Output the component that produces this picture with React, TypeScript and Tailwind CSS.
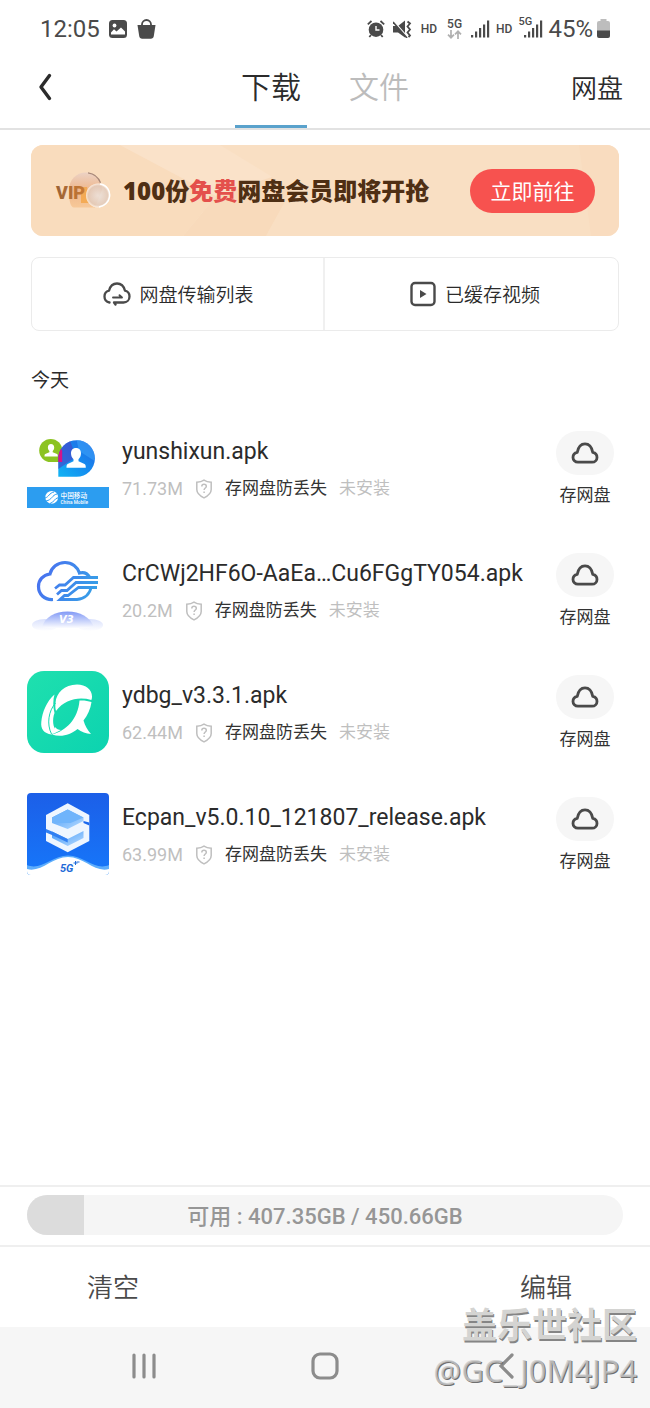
import React from 'react';

interface ApkFile {
  name: string;
  size: string;
  logo: React.ReactNode;
}

const YunshixunLogo: React.FC = () => (
  <svg viewBox="0 0 82 82" className="w-full h-full" aria-hidden="true">
    <defs>
      <linearGradient id="ysx" x1="0" y1="1" x2="1" y2="0">
        <stop offset="0" stopColor="#12b4f4" />
        <stop offset="0.55" stopColor="#1587ee" />
        <stop offset="1" stopColor="#2a5fe0" />
      </linearGradient>
    </defs>
    <path d="M23.7 12a11.5 11.5 0 0 1 11.5 11.5V35H23.7a11.5 11.5 0 0 1 0-23z" fill="#8cc322" />
    <path d="M31.3 49.8V31.4A18.3 18.3 0 1 1 49.6 49.8z" fill="url(#ysx)" />
    <path d="M31.3 31.4a18.3 18.3 0 0 1 12-17.2L49 30 31.3 42z" fill="#4a3fc4" opacity="0.6" />
    <path d="M49.6 13a18.3 18.3 0 0 1 18 21L52 24z" fill="#3aa4f8" opacity="0.6" />
    <path d="M31.3 35v-3.600c0-3.500 1-6.500 2.600-9.300.8.600 1.300 1.500 1.300 2.500V35z" fill="#d6148a" />
    <g fill="#fff">
      <path d="M24 17c2 0 3.200 1.400 3.200 3.400 0 1.500-.6 2.800-1.500 3.500v1.300l4.300 1.800c.6.300.8 1 .8 2.500H17.500c0-1.500.2-2.200.8-2.500l4.100-1.800v-1.300c-.9-.7-1.500-2-1.500-3.500 0-2 1.100-3.400 3.100-3.400z" />
      <path d="M49 21c3.300 0 5 2.200 5 5.300 0 2.600-1 4.700-2.500 5.900v2l6 2.700c1 .5 1.300 1.500 1.300 3.800H39.500c0-2.300.2-3.300 1.200-3.800l5.800-2.700v-2c-1.500-1.200-2.500-3.300-2.500-5.900 0-3.100 1.700-5.300 5-5.300z" />
    </g>
    <path d="M0 60h82v21H0z" fill="#2c9df0" />
    <circle cx="24.700" cy="70.300" r="6.400" fill="#fff" />
    <g stroke="#2c9df0" strokeWidth="1" fill="none">
      <path d="M18 71c4-1 4-5 9-6M19 74c6-1 6-6 11-7M23 76.500c4-1 4-5 8.500-6" />
    </g>
    <text x="33.500" y="71" fontSize="6.700" fill="#fff" fontWeight="500" fontFamily="Noto Sans CJK SC, sans-serif">中国移动</text>
    <text x="33.500" y="76.500" fontSize="4.700" fill="#fff" fontWeight="500" fontFamily="Roboto, sans-serif">China Mobile</text>
  </svg>
);

const CloudV3Logo: React.FC = () => (
  <svg viewBox="0 0 82 82" className="w-full h-full" aria-hidden="true">
    <defs>
      <linearGradient id="v3line" gradientUnits="userSpaceOnUse" x1="10" y1="20" x2="72" y2="50">
        <stop offset="0" stopColor="#4a6ef0" />
        <stop offset="1" stopColor="#35a4e6" />
      </linearGradient>
      <linearGradient id="v3base" x1="0" y1="0" x2="0" y2="1">
        <stop offset="0" stopColor="#8199f6" />
        <stop offset="1" stopColor="#fff" />
      </linearGradient>
    </defs>
    <g fill="none" stroke="url(#v3line)" strokeWidth="3.200">
      <path d="M26 50.500C17 51 11.500 45 11.500 37.500c0-6.500 4.500-11.500 11.500-12.500 1.500-6.500 7.500-11.500 15-11.500 7 0 12.500 4.500 14.500 10.500 4-1 8 .5 10 4" />
      <path d="M71 28.500H46.500l-8.500 7.500h-5.500l-4.500 3.500" strokeWidth="2.800" />
      <path d="M71 33.500H49L40 41.500h-5.500L30 45.500" strokeWidth="2.800" />
      <path d="M70 38.500H51.500L41 46.500h-3.500L33 50.500h17c8-1 13-6 14-12" strokeWidth="2.800" />
    </g>
    <ellipse cx="18" cy="76" rx="13" ry="6" fill="url(#v3base)" opacity="0.3" />
    <ellipse cx="63" cy="76" rx="13" ry="6" fill="url(#v3base)" opacity="0.3" />
    <path d="M15 78c3-10 13-15.500 25.500-15.500S63 68 67 78c-10 2-42 2-52 0z" fill="url(#v3base)" />
    <text x="32" y="74" fontSize="10" fontWeight="700" fontStyle="italic" fill="#fff" fontFamily="DejaVu Sans, sans-serif">V3</text>
  </svg>
);

const YdbgLogo: React.FC = () => (
  <svg viewBox="0 0 82 82" className="w-full h-full" aria-hidden="true">
    <defs>
      <linearGradient id="ydbg" x1="0" y1="0" x2="1" y2="1">
        <stop offset="0" stopColor="#1fe0ae" />
        <stop offset="1" stopColor="#0cd3b0" />
      </linearGradient>
    </defs>
    <rect width="82" height="82" rx="17" fill="url(#ydbg)" />
    <g fill="#fff">
      <path d="M28.500 32C29 22 37.500 13.500 50 13.500c9 0 15 5 15 12 0 1.500-.2 2.500-.7 3.500C52 25.500 38 28 29 40c-.7-2.500-.8-5-.5-8z" />
      <path d="M27.500 23.500c-1.500 5-1.700 12 0 18.500-2.500 7-1.500 14 2 18l-5 3.500C17 62.500 13.500 58 14.300 51 15.300 41 19.500 30.500 27.500 23.500z" />
      <path d="M25 63.500C39 60 51 48 52.500 29.500c4-.3 8.500.2 12 1.500C63.500 38 60.500 44.500 56.500 49.500c1.500 5 4 9.500 7.500 13.500-5-.5-9.500-2-13.500-5-7 6-16.500 8.500-25.500 5.500z" />
      <path d="M28 56c1.500 2 3.500 3 6 3l-8 4z" />
    </g>
    <path d="M24.500 63c-5-10-3-23 4-31" fill="none" stroke="#14d9af" strokeWidth="1" />
  </svg>
);

const EcpanLogo: React.FC = () => (
  <svg viewBox="0 0 82 82" className="w-full h-full" aria-hidden="true">
    <defs>
      <linearGradient id="ecbg" x1="0" y1="0" x2="0" y2="1">
        <stop offset="0" stopColor="#1c5fe8" />
        <stop offset="1" stopColor="#1677fa" />
      </linearGradient>
      <linearGradient id="ecface" x1="0" y1="0" x2="1" y2="1">
        <stop offset="0" stopColor="#3f97f8" />
        <stop offset="1" stopColor="#b9dcff" />
      </linearGradient>
    </defs>
    <rect width="82" height="82" rx="4" fill="url(#ecbg)" />
    <path d="M40.700 10.300L62.300 22v26L40.700 59.300 19 48V22z" fill="#eef6ff" />
    <path d="M25 24.500l15.700-8 15.800 8V28l-15.800 8L25 30z" fill="url(#ecface)" />
    <path d="M25 24.500l15.700-8 15.800 8-13 5.500H25z" fill="#6fb4fb" />
    <path d="M56.500 28l5.800 1.500v3L56.500 30z" fill="#1a68ee" />
    <path d="M25 38.500l15.700 7.500 15.800-8v7l-15.800 8L25 45z" fill="url(#ecface)" />
    <path d="M25 38.500l15.700 7.500v3.500L25 42l-6-2.500V36z" fill="#2f7ff2" />
    <path d="M0 72c14 6 25-9.500 41-9.500S68 78 82 72v6a4 4 0 0 1-4 4H4a4 4 0 0 1-4-4z" fill="#5eaefc" />
    <path d="M0 76c14 4 25-12 41-12s27 16 41 12v2a4 4 0 0 1-4 4H4a4 4 0 0 1-4-4z" fill="#fff" />
    <text x="33" y="79" fontSize="11" fontWeight="700" fontStyle="italic" fill="#1f6bd8" fontFamily="Roboto, sans-serif">5G</text>
    <path d="M46.500 70h4M48.500 68v4M49.500 69h3" stroke="#1f6bd8" strokeWidth="1" />
  </svg>
);

const files: ApkFile[] = [
  { name: 'yunshixun.apk', size: '71.73M', logo: <YunshixunLogo /> },
  { name: 'CrCWj2HF6O-AaEa…Cu6FGgTY054.apk', size: '20.2M', logo: <CloudV3Logo /> },
  { name: 'ydbg_v3.3.1.apk', size: '62.44M', logo: <YdbgLogo /> },
  { name: 'Ecpan_v5.0.10_121807_release.apk', size: '63.99M', logo: <EcpanLogo /> },
];

const SignalBars: React.FC = () => (
  <svg width="19" height="18" viewBox="0 0 19 18" fill="#4a4a4a" aria-hidden="true">
    <path d="M0 15h2.200v2.500H0zM4 11.500h2.200v6H4zM8 8h2.200v9.500H8zM12 4.500h2.200v13H12zM16 .5h2.200v17H16z" />
  </svg>
);

const StatusBar: React.FC = () => (
  <div className="flex items-center justify-between h-[57px] px-10 text-[#4a4a4a]">
    <div className="flex items-center">
      <span className="text-2xl">12:05</span>
      <svg width="18" height="18" viewBox="0 0 18 18" className="ml-[9px]" aria-hidden="true">
        <rect width="18" height="18" rx="3.500" fill="#4a4a4a" />
        <circle cx="5.500" cy="5.500" r="1.900" fill="#fff" />
        <path d="M2 14.500v-2l3-3.200 2.500 2.200L12 7.500l4 4v3z" fill="#fff" />
      </svg>
      <svg width="19" height="20" viewBox="0 0 19 20" className="ml-2.5" aria-hidden="true">
        <path d="M5 8V5.500a4.500 4.500 0 0 1 9 0V8" fill="none" stroke="#4a4a4a" strokeWidth="1.800" />
        <path d="M.5 6h18l-1.700 11c-.3 1.800-1.300 2.800-3 2.800H5.200c-1.700 0-2.700-1-3-2.800z" fill="#4a4a4a" />
      </svg>
    </div>
    <div className="flex items-center">
      <svg width="18" height="18" viewBox="0 0 18 18" aria-hidden="true">
        <circle cx="9" cy="9.700" r="7.300" fill="#4a4a4a" />
        <path d="M.8 4.300L4.500 1M17.200 4.300L13.500 1M4 15l-1.700 2M14 15l1.700 2" stroke="#4a4a4a" strokeWidth="1.800" fill="none" />
        <path d="M9 6v4h3.500" stroke="#fff" strokeWidth="1.400" fill="none" />
      </svg>
      <svg width="19" height="18" viewBox="0 0 19 18" className="ml-2" aria-hidden="true">
        <path d="M0 6h5l7-5.500v17L5 12.500H0z" fill="#4a4a4a" />
        <path d="M0 .5l14 16" stroke="#fff" strokeWidth="1.600" />
        <path d="M0 2l14 16" stroke="#4a4a4a" strokeWidth="1.600" />
        <path d="M14.500 1.500l2.500 2-2.500 3 2.500 3-2.500 3 2.500 3-1.500 1.500" stroke="#4a4a4a" strokeWidth="1.800" fill="none" />
      </svg>
      <span className="ml-[9px] text-xs font-medium">HD</span>
      <span className="ml-2.5 flex flex-col items-center">
        <span className="text-xs leading-3 font-medium">5G</span>
        <svg width="15" height="9" viewBox="0 0 15 9" fill="none" stroke="#b0b0b0" strokeWidth="1.700" aria-hidden="true">
          <path d="M4 0v7.500M1 4.700l3 3 3-3M11 9V1.500M8 4.300l3-3 3 3" />
        </svg>
      </span>
      <span className="ml-[9px]"><SignalBars /></span>
      <span className="ml-1.5 text-xs font-medium">HD</span>
      <span className="relative ml-3">
        <SignalBars />
        <span className="absolute -left-1.5 -top-1 bg-white pr-px text-[11px] leading-3 font-medium">5G</span>
      </span>
      <span className="ml-[5px] text-2xl">45%</span>
      <svg width="13" height="19" viewBox="0 0 13 19" className="ml-1" aria-hidden="true">
        <path d="M3.500 0h6v2H11a2 2 0 0 1 2 2v8H0V4a2 2 0 0 1 2-2h1.500z" fill="#bdbdbd" />
        <path d="M0 11.500h13V17a2 2 0 0 1-2 2H2a2 2 0 0 1-2-2z" fill="#4a4a4a" />
      </svg>
    </div>
  </div>
);

const Header: React.FC = () => (
  <header className="flex items-stretch h-[73px] border-b-2 border-[#e2e2e2] px-[27px] text-[#2b2b2b] font-['Noto_Sans_CJK_SC',sans-serif]">
    <div className="flex flex-1 items-center pb-3">
      <button type="button" aria-label="返回" className="px-2.5">
        <svg width="16" height="28" viewBox="0 0 16 28" fill="none" stroke="#2b2b2b" strokeWidth="3.400" strokeLinecap="round" strokeLinejoin="round">
          <path d="M12.500 2.500L4 14l8.500 11.500" />
        </svg>
      </button>
    </div>
    <nav className="flex gap-9">
      <button type="button" className="border-b-3 border-[#5aa2cc] px-1.5 pb-3 text-3xl font-[350]">下载</button>
      <button type="button" className="border-b-3 border-transparent px-1.5 pb-3 text-3xl font-[350] text-[#bcbcbc]">文件</button>
    </nav>
    <div className="flex flex-1 items-center justify-end pb-3">
      <a href="#pan" className="text-[26px] font-[350]">网盘</a>
    </div>
  </header>
);

const Banner: React.FC = () => (
  <section className="relative flex items-center h-[91px] mt-[15px] mx-[31px] overflow-hidden rounded-xl bg-[#f9dfc3] px-6">
    <svg viewBox="0 0 588 91" preserveAspectRatio="none" className="absolute inset-0 w-full h-full" aria-hidden="true">
      <path d="M0 0h89l96 51-33 40H0z" fill="#f9dcbd" />
      <path d="M89 0h100l72 44-26 47h-83l33-40z" fill="#fae2c9" />
      <path d="M185 51l-33 40h83l26-47-20-12z" fill="#f8dabb" />
      <path d="M548 0h40v91h-28z" fill="#f9dcbf" />
    </svg>
    <svg width="56" height="40" viewBox="0 0 56 40" className="relative shrink-0" aria-hidden="true">
      <defs>
        <linearGradient id="vipDisc" x1="0" y1="0" x2="0" y2="1">
          <stop offset="0" stopColor="#ecd2c4" />
          <stop offset="0.5" stopColor="#efb78c" />
          <stop offset="1" stopColor="#f7c898" />
        </linearGradient>
        <linearGradient id="vipText" x1="0" y1="0" x2="1" y2="0">
          <stop offset="0" stopColor="#9a6236" />
          <stop offset="1" stopColor="#c97a34" />
        </linearGradient>
        <radialGradient id="vipGlass">
          <stop offset="0" stopColor="#ece4e0" />
          <stop offset="0.8" stopColor="#e2cbbc" />
          <stop offset="1" stopColor="#fdf4ec" />
        </radialGradient>
      </defs>
      <path d="M14 19C14 9 21 1.500 31 1.500S47 9 47 19l-7 17.500H19c-4 0-5-8-5-17.500z" fill="url(#vipDisc)" />
      <path d="M33 1.800c6 .8 10.500 4.700 12.500 10" stroke="#a88878" strokeWidth="1.200" fill="none" />
      <path d="M26 16h6l2 16h-8z" fill="#f4a546" opacity="0.8" />
      <circle cx="43" cy="24.500" r="12" fill="url(#vipGlass)" opacity="0.85" />
      <path d="M45 13c7 1 10.500 7 9.500 13S48 35 44 36" stroke="#fff" strokeWidth="1.500" fill="none" />
      <text x="1" y="28" fontSize="18" fontWeight="900" fill="url(#vipText)" fontFamily="Roboto, sans-serif">VIP</text>
    </svg>
    <p className="relative ml-3 text-2xl font-black whitespace-nowrap text-[#4f2f14] font-['Noto_Sans','Noto_Sans_CJK_SC',sans-serif]">
      100份<span className="text-[#e4504c]">免费</span>网盘会员即将开抢
    </p>
    <button type="button" className="relative ml-auto w-[125px] h-11 shrink-0 rounded-full bg-[#f7524f] text-[21px] text-white font-['Noto_Sans_CJK_SC',sans-serif]">
      立即前往
    </button>
  </section>
);

const QuickLinks: React.FC = () => (
  <section className="grid grid-cols-2 h-[74px] mt-[21px] mx-[31px] rounded-lg border border-[#ebebeb] divide-x-2 divide-[#f0f0f0] text-[19px] font-[350] text-[#2b2b2b] font-['Noto_Sans_CJK_SC',sans-serif]">
    <button type="button" className="flex items-center justify-center gap-2 pl-0.5">
      <svg width="28" height="24" viewBox="0 0 28 24" fill="none" stroke="#4a4a4a" strokeWidth="2.300" strokeLinecap="round" strokeLinejoin="round" aria-hidden="true">
        <path d="M6.500 20.500C3.500 20 1.500 17.500 1.500 14.500c0-3 2-5.200 4.500-5.800C7.200 4 10.200 1.500 14 1.500S20.800 4 22 8.700c2.500.6 4.500 2.800 4.500 5.800 0 3.400-2.600 6-6 6H11l1.500 2" />
        <path d="M10 15.500h9l-2.500-2.300" strokeWidth="1.900" />
      </svg>
      网盘传输列表
    </button>
    <button type="button" className="flex items-center justify-center gap-2 pl-1.5">
      <svg width="28" height="26" viewBox="0 0 28 26" fill="none" stroke="#4a4a4a" strokeWidth="2.400" aria-hidden="true">
        <rect x="2.500" y="2" width="23" height="22" rx="3.500" />
        <path d="M11 9l6.500 4-6.500 4z" fill="#4a4a4a" stroke="none" />
      </svg>
      已缓存视频
    </button>
  </section>
);

const FileRow: React.FC<{ file: ApkFile }> = ({ file }) => (
  <li className="flex items-start h-[82px]">
    <div className="w-[82px] h-[82px] shrink-0">{file.logo}</div>
    <div className="flex-1 min-w-0 pt-2 ml-[13px]">
      <h3 className="text-[23px] leading-[34px] whitespace-nowrap text-[#2b2b2b]">{file.name}</h3>
      <div className="flex items-center mt-2 h-6 text-[17px] text-[#bfbfbf]">
        <span className="text-lg">{file.size}</span>
        <svg width="18" height="20" viewBox="0 0 18 20" fill="none" stroke="#bfbfbf" strokeWidth="1.500" className="ml-3" aria-hidden="true">
          <path d="M9 1.200c2.200 1.500 4.500 2 7.200 2.100v7.200c0 4-3.500 6.500-7.200 8.300-3.700-1.800-7.200-4.300-7.200-8.300V3.300C4.500 3.200 6.800 2.700 9 1.200z" />
          <path d="M6.800 7.500c0-1.400 1-2.200 2.200-2.200s2.300.8 2.300 2.100c0 1.600-2.200 1.700-2.200 3.600M9.100 12.500v1.600" />
        </svg>
        <a href="#protect" className="ml-3 text-[#333]">存网盘防丢失</a>
        <span className="ml-3">未安装</span>
      </div>
    </div>
    <button type="button" className="flex flex-col items-center pt-1 shrink-0 text-[17px] text-[#333]">
      <span className="flex items-center justify-center w-[58px] h-11 rounded-full bg-[#f6f6f6]">
        <svg width="28" height="22" viewBox="0 0 28 22" fill="none" stroke="#4a4a4a" strokeWidth="2.800" strokeLinejoin="round" aria-hidden="true">
          <path d="M7 20.200c-3 0-5-2.200-5-4.800 0-2.500 1.700-4.500 4.200-5C7.200 5.200 10 1.800 14 1.800s6.800 3.400 7.800 8.600c2.500.5 4.200 2.500 4.200 5 0 2.600-2 4.800-5 4.800z" />
        </svg>
      </span>
      <span className="mt-2 leading-6">存网盘</span>
    </button>
  </li>
);

const StorageBar: React.FC = () => {
  const usedPercent = ((450.66 - 407.35) / 450.66) * 100;
  return (
    <div className="h-[62px] border-y-2 border-[#efefef] px-[27px] pt-2">
      <div className="relative flex items-center justify-center h-10 pt-0.5 overflow-hidden rounded-full bg-[#f5f5f5]">
        <div className="absolute left-0 inset-y-0 bg-[#dcdcdc]" style={{ width: `${usedPercent}%` }} />
        <span className="relative text-[22px] font-medium text-[#969696]">可用 : 407.35GB / 450.66GB</span>
      </div>
    </div>
  );
};

const BottomNav: React.FC = () => (
  <nav className="grid grid-cols-3 place-items-center h-[81px] px-[54px] pb-[3px] bg-[#f6f6f6]">
    <button type="button" aria-label="最近任务">
      <svg width="26" height="26" viewBox="0 0 26 26" stroke="#8c8c8c" strokeWidth="3.200" strokeLinecap="round">
        <path d="M3 2v22M13 2v22M23 2v22" />
      </svg>
    </button>
    <button type="button" aria-label="主屏幕">
      <svg width="28" height="28" viewBox="0 0 28 28" fill="none" stroke="#8c8c8c" strokeWidth="3.200">
        <rect x="2" y="2" width="24" height="24" rx="7" />
      </svg>
    </button>
    <button type="button" aria-label="返回上一页">
      <svg width="16" height="26" viewBox="0 0 16 26" fill="none" stroke="#8c8c8c" strokeWidth="3.200" strokeLinecap="round">
        <path d="M14 2L3 13l11 11" />
      </svg>
    </button>
  </nav>
);

const Watermark: React.FC = () => (
  <div className="absolute right-[13px] bottom-[17px] text-right whitespace-nowrap pointer-events-none">
    <div className="text-[35px] leading-11 font-bold text-[#d4d4d2] [text-shadow:1px_2px_0_#858585]">盖乐世社区</div>
    <div className="text-[31px] leading-[42px] text-[#c9c9c9]/80 [text-shadow:1px_1px_0_#6f6f6f] font-['Noto_Sans',sans-serif]">@GC_J0M4JP4</div>
  </div>
);

const App: React.FC = () => {
  return (
    <div className="relative flex flex-col min-h-screen bg-white font-['Roboto','Noto_Sans_CJK_SC',sans-serif]">
      <StatusBar />
      <Header />
      <main className="pb-10">
        <Banner />
        <QuickLinks />
        <h2 className="mt-9 ml-[31px] text-[19px] leading-7 text-[#2b2b2b]">今天</h2>
        <ul className="flex flex-col gap-10 mt-8 pl-[27px] pr-9">
          {files.map((file) => (
            <FileRow key={file.name} file={file} />
          ))}
        </ul>
      </main>
      <footer className="mt-auto">
        <StorageBar />
        <div className="flex items-center justify-between h-20 pb-1 pl-[87px] pr-[78px] text-[26px] font-[350] text-[#4a4a4a] font-['Noto_Sans_CJK_SC',sans-serif]">
          <button type="button">清空</button>
          <button type="button">编辑</button>
        </div>
        <BottomNav />
      </footer>
      <Watermark />
    </div>
  );
};

export default App;
